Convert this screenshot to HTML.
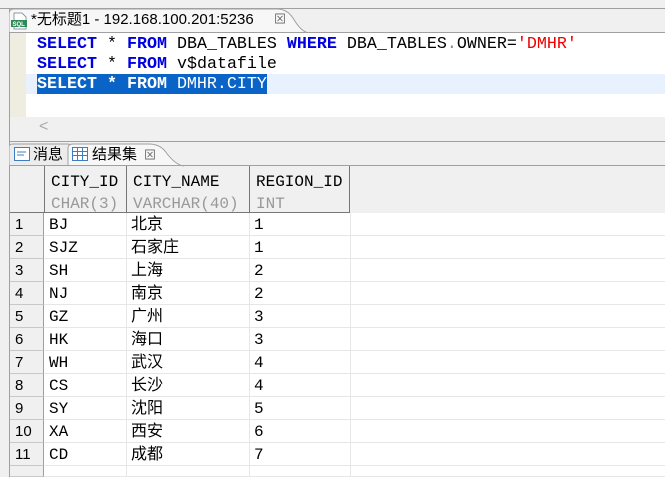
<!DOCTYPE html>
<html style="width:665px;height:477px;overflow:hidden"><head><meta charset="utf-8"><style>
*{margin:0;padding:0;box-sizing:border-box}
body{width:665px;height:477px;overflow:hidden;background:#f0f0f0;position:relative;font-family:"Liberation Sans","Noto Sans CJK SC",sans-serif}
.abs{position:absolute}
.mono{font-family:"Liberation Mono","Noto Sans CJK SC",monospace}
.kw{color:#0000e0;font-weight:bold}
.code div{height:20px;line-height:20px;font-size:16.67px;white-space:pre}
.grid .r{position:absolute;left:10px;width:655px;height:23px;border-bottom:1px solid #e6e6e6;font-size:16px;line-height:24px}
.grid .r span{position:absolute;top:0}
.num{position:absolute;left:0;width:34px;height:23px;background:#f0f0f0;border-right:1px solid #a0a0a0;border-bottom:1px solid #c8c8c8;padding-left:5px;font-family:"Liberation Sans",sans-serif;font-size:15px}
.vl{position:absolute;top:213px;height:264px;width:1px;background:#e6e6e6}
</style></head><body>
<div class="abs" style="left:0;top:8px;width:665px;height:1px;background:#a0a0a0"></div>
<div class="abs" style="left:9px;top:8px;width:1px;height:469px;background:#a0a0a0"></div>
<svg class="abs" style="left:9px;top:8px" width="300" height="26"><path d="M0 25 V6 Q0 1 5 1 H268 Q278 1 284 10 Q292 24 300 25" fill="#f7f7f7" stroke="#a0a0a0"/></svg>
<svg class="abs" style="left:11px;top:12px" width="18" height="18"><path d="M3 1 H11 L15 5 V17 H3 Z" fill="#fff" stroke="#8a9aa8"/><rect x="0" y="8" width="16" height="7" fill="#2e8b57"/><text x="1.5" y="14" font-size="6" fill="#fff" font-family="Liberation Sans" font-weight="bold">SQL</text></svg>
<div class="abs" style="left:31px;top:10px;font-size:15px;line-height:20px;color:#000">*无标题1 - 192.168.100.201:5236</div>
<div class="abs" style="left:274px;top:10px;font-size:12px;color:#666">⊠</div>
<div class="abs" style="left:9px;top:32px;width:656px;height:1px;background:#a0a0a0"></div>
<div class="abs" style="left:10px;top:33px;width:655px;height:84px;background:#fff"></div>
<div class="abs" style="left:10px;top:33px;width:16px;height:84px;background:#efede0"></div>
<div class="abs" style="left:26px;top:74px;width:639px;height:20px;background:#e8f2fe"></div>
<div class="abs" style="left:37px;top:74px;width:230px;height:20px;background:#0a64c8"></div>
<div class="abs code mono" style="left:37px;top:35px">
<div><span class="kw">SELECT</span> * <span class="kw">FROM</span> DBA_TABLES <span class="kw">WHERE</span> DBA_TABLES<span style="color:#888">.</span>OWNER=<span style="color:#e00">'DMHR'</span></div>
<div><span class="kw">SELECT</span> * <span class="kw">FROM</span> v$datafile</div>
<div style="color:#fff;font-weight:bold"><span>SELECT * FROM </span><span style="font-weight:normal">DMHR.CITY</span></div>
</div>
<div class="abs" style="left:39px;top:118px;font-size:16px;color:#aaa">&lt;</div>
<div class="abs" style="left:9px;top:141px;width:656px;height:1px;background:#a0a0a0"></div>
<svg class="abs" style="left:9px;top:141px" width="200" height="26"><path d="M0 25 V6 Q0 3 4 3 H59 Q62 3 62 7 V25" fill="#ececec" stroke="#a0a0a0"/><path d="M59 25 V7 Q59 3 64 3 H140 Q150 3 156 10 Q166 24 175 25" fill="#f7f7f7" stroke="#a0a0a0"/></svg>
<svg class="abs" style="left:14px;top:147px" width="16" height="14"><rect x="0.5" y="0.5" width="15" height="13" fill="#fff" stroke="#3c7dc4"/><path d="M3 5H12M3 8H10" stroke="#3c7dc4"/></svg>
<div class="abs" style="left:33px;top:145px;font-size:15px;line-height:20px">消息</div>
<svg class="abs" style="left:72px;top:147px" width="16" height="14"><rect x="0.5" y="0.5" width="15" height="13" fill="#fff" stroke="#3c7dc4"/><path d="M0 4.5H16M0 8.5H16M5.5 0V14M10.5 0V14" stroke="#3c7dc4"/></svg>
<div class="abs" style="left:92px;top:145px;font-size:15px;line-height:20px">结果集</div>
<div class="abs" style="left:144px;top:146px;font-size:12px;color:#666">⊠</div>
<div class="abs" style="left:9px;top:165px;width:656px;height:1px;background:#a0a0a0"></div>
<div class="abs" style="left:10px;top:166px;width:340px;height:47px;border-bottom:1px solid #777;border-right:1px solid #777"></div>
<div class="abs" style="left:44px;top:166px;width:1px;height:47px;background:#777"></div>
<div class="abs" style="left:126px;top:166px;width:1px;height:47px;background:#777"></div>
<div class="abs" style="left:249px;top:166px;width:1px;height:47px;background:#777"></div>
<div class="abs mono" style="left:51px;top:171px;font-size:16px;line-height:22px">CITY_ID<br><span style="color:#999">CHAR(3)</span></div>
<div class="abs mono" style="left:133px;top:171px;font-size:16px;line-height:22px">CITY_NAME<br><span style="color:#999">VARCHAR(40)</span></div>
<div class="abs mono" style="left:256px;top:171px;font-size:16px;line-height:22px">REGION_ID<br><span style="color:#999">INT</span></div>
<div class="abs" style="left:10px;top:213px;width:655px;height:264px;background:#fff"></div>
<div class="vl" style="left:126px"></div><div class="vl" style="left:249px"></div><div class="vl" style="left:350px"></div>
<div class="grid mono">
<div class="r" style="top:213px"><div class="num">1</div><span style="left:39px">BJ</span><span style="left:121px">北京</span><span style="left:244px">1</span></div>
<div class="r" style="top:236px"><div class="num">2</div><span style="left:39px">SJZ</span><span style="left:121px">石家庄</span><span style="left:244px">1</span></div>
<div class="r" style="top:259px"><div class="num">3</div><span style="left:39px">SH</span><span style="left:121px">上海</span><span style="left:244px">2</span></div>
<div class="r" style="top:282px"><div class="num">4</div><span style="left:39px">NJ</span><span style="left:121px">南京</span><span style="left:244px">2</span></div>
<div class="r" style="top:305px"><div class="num">5</div><span style="left:39px">GZ</span><span style="left:121px">广州</span><span style="left:244px">3</span></div>
<div class="r" style="top:328px"><div class="num">6</div><span style="left:39px">HK</span><span style="left:121px">海口</span><span style="left:244px">3</span></div>
<div class="r" style="top:351px"><div class="num">7</div><span style="left:39px">WH</span><span style="left:121px">武汉</span><span style="left:244px">4</span></div>
<div class="r" style="top:374px"><div class="num">8</div><span style="left:39px">CS</span><span style="left:121px">长沙</span><span style="left:244px">4</span></div>
<div class="r" style="top:397px"><div class="num">9</div><span style="left:39px">SY</span><span style="left:121px">沈阳</span><span style="left:244px">5</span></div>
<div class="r" style="top:420px"><div class="num">10</div><span style="left:39px">XA</span><span style="left:121px">西安</span><span style="left:244px">6</span></div>
<div class="r" style="top:443px"><div class="num">11</div><span style="left:39px">CD</span><span style="left:121px">成都</span><span style="left:244px">7</span></div>
<div class="r" style="top:466px;height:11px"><div class="num" style="height:11px"></div></div>
</div>
</body></html>
